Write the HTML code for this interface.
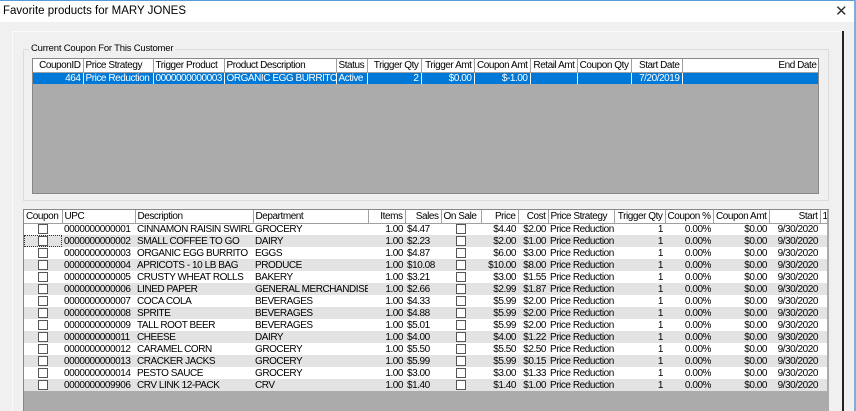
<!DOCTYPE html>
<html><head><style>
*{margin:0;padding:0;box-sizing:border-box}
body{width:856px;height:411px;background:#f0f0f0;font-family:"Liberation Sans",sans-serif;font-size:10px;color:#000;position:relative;overflow:hidden}
.title{position:absolute;left:0;top:0;width:856px;height:22px;background:#fff;border-top:1px solid #5b9bd5}
.title span{position:absolute;left:3px;top:4px;font-size:11.5px;color:#000}
.title .x{position:absolute;left:835px;top:1px;font-size:15px;color:#333}
.rb{position:absolute;left:854px;top:0;width:2px;height:411px;background:#7aaee0}
.panel{position:absolute;left:12px;top:31px;width:832px;height:380px;border-top:1px solid #fafafa;border-left:1px solid #fafafa;background:#f0f0f0}
.blk{position:absolute;left:842px;top:31px;width:2px;height:380px;background:#222}
.grp{position:absolute;left:23px;top:49px;width:806px;height:152px;border:1px solid #dcdcdc}
.grp .lbl{position:absolute;left:5px;top:-7px;background:#f0f0f0;padding:0 2px;font-size:9.5px;letter-spacing:-0.2px}
.grid{position:absolute;background:#ababab;overflow:hidden}
table{border-collapse:collapse;table-layout:fixed;font-size:10px;letter-spacing:-0.45px}
td,th{height:12px;line-height:11px;padding:0 2px;white-space:nowrap;overflow:hidden;font-weight:normal}
th{background:#fff;border-right:1px solid #a0a0a0;border-bottom:1px solid #a0a0a0;height:13px}
.r{text-align:right}.l{text-align:left}.c{text-align:center}
.sel td{background:#0078d7;color:#fff;border-right:1px solid #fff}
tr.w td{background:#fff}tr.g td{background:#e3e3e3}
.cb{display:inline-block;width:10px;height:10px;border:1px solid #555;background:#fff;vertical-align:middle}
</style></head><body>
<div class="title"><span>Favorite products for MARY JONES</span><span class="x">✕</span></div>
<div class="panel"></div>
<div class="blk"></div>
<div class="rb"></div>
<div class="grp"><span class="lbl">Current Coupon For This Customer</span></div>
<div class="grid" style="left:32px;top:58px;width:787px;height:136px;border:1px solid #888">
<table style="width:786px">
<colgroup><col style="width:50px"><col style="width:70px"><col style="width:71px"><col style="width:112px"><col style="width:31px"><col style="width:54px"><col style="width:53px"><col style="width:56px"><col style="width:47px"><col style="width:54px"><col style="width:51px"><col style="width:137px"></colgroup>
<tr><th class="r">CouponID</th><th class="l">Price Strategy</th><th class="l">Trigger Product</th><th class="l">Product Description</th><th class="l">Status</th><th class="r">Trigger Qty</th><th class="r">Trigger Amt</th><th class="r">Coupon Amt</th><th class="r">Retail Amt</th><th class="r">Coupon Qty</th><th class="r">Start Date</th><th class="r">End Date</th></tr>
<tr class="sel"><td class="r">464</td><td>Price Reduction</td><td>0000000000003</td><td>ORGANIC EGG BURRITO</td><td>Active</td><td class="r">2</td><td class="r">$0.00</td><td class="r">$-1.00</td><td></td><td></td><td class="r">7/20/2019</td><td></td></tr>
</table></div>
<div class="grid" style="left:23px;top:209px;width:806px;height:202px;border-left:1px solid #888;border-top:1px solid #888">
<table style="width:803px">
<colgroup><col style="width:38px"><col style="width:73px"><col style="width:118px"><col style="width:115px"><col style="width:37px"><col style="width:36px"><col style="width:40px"><col style="width:37px"><col style="width:30px"><col style="width:66px"><col style="width:51px"><col style="width:48px"><col style="width:56px"><col style="width:51px"><col style="width:7px"></colgroup>
<tr><th class="l">Coupon</th><th class="l">UPC</th><th class="l">Description</th><th class="l">Department</th><th class="r">Items</th><th class="r">Sales</th><th class="l">On Sale</th><th class="r">Price</th><th class="r">Cost</th><th class="l">Price Strategy</th><th class="r">Trigger Qty</th><th class="r">Coupon %</th><th class="r">Coupon Amt</th><th class="r">Start</th><th>1</th></tr>
<tr class="w"><td class="c"><i class="cb"></i></td><td>0000000000001</td><td>CINNAMON RAISIN SWIRL</td><td>GROCERY</td><td class="r">1.00</td><td>$4.47</td><td class="c"><i class="cb"></i></td><td class="r">$4.40</td><td class="r">$2.00</td><td>Price Reduction</td><td class="r">1</td><td class="r">0.00%</td><td class="r">$0.00</td><td class="r">9/30/2020</td><td></td></tr>
<tr class="g"><td class="c" style="outline:1px dotted #333;outline-offset:-1px"><i class="cb"></i></td><td>0000000000002</td><td>SMALL COFFEE TO GO</td><td>DAIRY</td><td class="r">1.00</td><td>$2.23</td><td class="c"><i class="cb"></i></td><td class="r">$2.00</td><td class="r">$1.00</td><td>Price Reduction</td><td class="r">1</td><td class="r">0.00%</td><td class="r">$0.00</td><td class="r">9/30/2020</td><td></td></tr>
<tr class="w"><td class="c"><i class="cb"></i></td><td>0000000000003</td><td>ORGANIC EGG BURRITO</td><td>EGGS</td><td class="r">1.00</td><td>$4.87</td><td class="c"><i class="cb"></i></td><td class="r">$6.00</td><td class="r">$3.00</td><td>Price Reduction</td><td class="r">1</td><td class="r">0.00%</td><td class="r">$0.00</td><td class="r">9/30/2020</td><td></td></tr>
<tr class="g"><td class="c"><i class="cb"></i></td><td>0000000000004</td><td>APRICOTS - 10 LB BAG</td><td>PRODUCE</td><td class="r">1.00</td><td>$10.08</td><td class="c"><i class="cb"></i></td><td class="r">$10.00</td><td class="r">$8.00</td><td>Price Reduction</td><td class="r">1</td><td class="r">0.00%</td><td class="r">$0.00</td><td class="r">9/30/2020</td><td></td></tr>
<tr class="w"><td class="c"><i class="cb"></i></td><td>0000000000005</td><td>CRUSTY WHEAT ROLLS</td><td>BAKERY</td><td class="r">1.00</td><td>$3.21</td><td class="c"><i class="cb"></i></td><td class="r">$3.00</td><td class="r">$1.55</td><td>Price Reduction</td><td class="r">1</td><td class="r">0.00%</td><td class="r">$0.00</td><td class="r">9/30/2020</td><td></td></tr>
<tr class="g"><td class="c"><i class="cb"></i></td><td>0000000000006</td><td>LINED PAPER</td><td>GENERAL MERCHANDISE</td><td class="r">1.00</td><td>$2.66</td><td class="c"><i class="cb"></i></td><td class="r">$2.99</td><td class="r">$1.87</td><td>Price Reduction</td><td class="r">1</td><td class="r">0.00%</td><td class="r">$0.00</td><td class="r">9/30/2020</td><td></td></tr>
<tr class="w"><td class="c"><i class="cb"></i></td><td>0000000000007</td><td>COCA COLA</td><td>BEVERAGES</td><td class="r">1.00</td><td>$4.33</td><td class="c"><i class="cb"></i></td><td class="r">$5.99</td><td class="r">$2.00</td><td>Price Reduction</td><td class="r">1</td><td class="r">0.00%</td><td class="r">$0.00</td><td class="r">9/30/2020</td><td></td></tr>
<tr class="g"><td class="c"><i class="cb"></i></td><td>0000000000008</td><td>SPRITE</td><td>BEVERAGES</td><td class="r">1.00</td><td>$4.88</td><td class="c"><i class="cb"></i></td><td class="r">$5.99</td><td class="r">$2.00</td><td>Price Reduction</td><td class="r">1</td><td class="r">0.00%</td><td class="r">$0.00</td><td class="r">9/30/2020</td><td></td></tr>
<tr class="w"><td class="c"><i class="cb"></i></td><td>0000000000009</td><td>TALL ROOT BEER</td><td>BEVERAGES</td><td class="r">1.00</td><td>$5.01</td><td class="c"><i class="cb"></i></td><td class="r">$5.99</td><td class="r">$2.00</td><td>Price Reduction</td><td class="r">1</td><td class="r">0.00%</td><td class="r">$0.00</td><td class="r">9/30/2020</td><td></td></tr>
<tr class="g"><td class="c"><i class="cb"></i></td><td>0000000000011</td><td>CHEESE</td><td>DAIRY</td><td class="r">1.00</td><td>$4.00</td><td class="c"><i class="cb"></i></td><td class="r">$4.00</td><td class="r">$1.22</td><td>Price Reduction</td><td class="r">1</td><td class="r">0.00%</td><td class="r">$0.00</td><td class="r">9/30/2020</td><td></td></tr>
<tr class="w"><td class="c"><i class="cb"></i></td><td>0000000000012</td><td>CARAMEL CORN</td><td>GROCERY</td><td class="r">1.00</td><td>$5.50</td><td class="c"><i class="cb"></i></td><td class="r">$5.50</td><td class="r">$2.50</td><td>Price Reduction</td><td class="r">1</td><td class="r">0.00%</td><td class="r">$0.00</td><td class="r">9/30/2020</td><td></td></tr>
<tr class="g"><td class="c"><i class="cb"></i></td><td>0000000000013</td><td>CRACKER JACKS</td><td>GROCERY</td><td class="r">1.00</td><td>$5.99</td><td class="c"><i class="cb"></i></td><td class="r">$5.99</td><td class="r">$0.15</td><td>Price Reduction</td><td class="r">1</td><td class="r">0.00%</td><td class="r">$0.00</td><td class="r">9/30/2020</td><td></td></tr>
<tr class="w"><td class="c"><i class="cb"></i></td><td>0000000000014</td><td>PESTO SAUCE</td><td>GROCERY</td><td class="r">1.00</td><td>$3.00</td><td class="c"><i class="cb"></i></td><td class="r">$3.00</td><td class="r">$1.33</td><td>Price Reduction</td><td class="r">1</td><td class="r">0.00%</td><td class="r">$0.00</td><td class="r">9/30/2020</td><td></td></tr>
<tr class="g"><td class="c"><i class="cb"></i></td><td>0000000009906</td><td>CRV LINK 12-PACK</td><td>CRV</td><td class="r">1.00</td><td>$1.40</td><td class="c"><i class="cb"></i></td><td class="r">$1.40</td><td class="r">$1.00</td><td>Price Reduction</td><td class="r">1</td><td class="r">0.00%</td><td class="r">$0.00</td><td class="r">9/30/2020</td><td></td></tr>
</table></div>
</body></html>
